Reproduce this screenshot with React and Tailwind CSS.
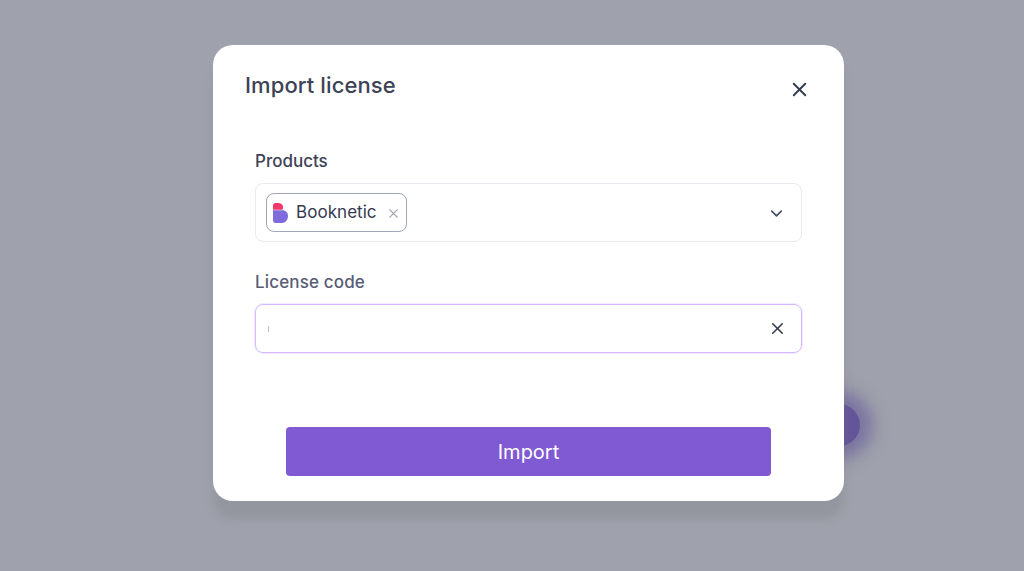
import React from "react";
import { X, ChevronDown } from "lucide-react";

const BookneticLogo = () => (
  <svg width="16" height="20" viewBox="0 0 16 20" className="shrink-0">
    <path d="M0 2.5C0 1.100 1.100 0 2.500 0H5C7.800 0 10 1.600 10 4 10 5 9.800 5.900 9.400 6.800H0Z" fill="#f5386c" />
    <path d="M0 7.200H9.500C12.800 7.200 15 9.800 15 13S12.800 20 9 20H2.500C1.100 20 0 18.900 0 17.500Z" fill="#7f6bdc" />
  </svg>
);

export default function App() {
  return (
    <div
      className="relative h-[571px] w-[1024px] overflow-hidden bg-[#9fa2ac] pl-[213px] pt-[45px]"
      style={{ fontFamily: "Inter, sans-serif" }}
    >
      {/* floating button glow behind the modal */}
      <div className="absolute left-[818px] top-[404px] h-[42px] w-[42px] rounded-full bg-[#64559a] shadow-[0_0_16px_13px_rgba(100,85,154,0.6)]" />

      <div className="relative flex h-[456px] w-[631px] flex-col rounded-[20px] bg-white shadow-[0_18px_10px_rgba(110,115,120,0.25)]">
        <div className="flex items-start justify-between pl-8 pr-[33px] pt-[26px]">
          <h2 className="text-[22px] font-medium leading-[28px] tracking-[0.1px] text-[#3d4256]">Import license</h2>
          <X size={23} strokeWidth={2} className="mt-[7px] text-[#333b4f]" />
        </div>

        <div className="flex flex-col px-[42px] pt-[50px]">
          <label className="text-[17px] font-medium leading-5 text-[#3d4256]">Products</label>
          <div className="mt-[12px] flex h-[59px] items-center justify-between rounded-lg border border-[#e9e9f3] pl-[10px] pr-[15px]">
            <div className="flex h-[39px] w-[141px] items-center rounded-lg border border-[#a3a6b8] pl-[6px]">
              <BookneticLogo />
              <span className="ml-[7px] pt-px text-[17px] tracking-[0.05px] text-[#343a50]">Booknetic</span>
              <X size={15} strokeWidth={1.75} className="ml-[9px] mt-px text-[#a5a7b3]" />
            </div>
            <ChevronDown size={19} strokeWidth={2} className="mt-px text-[#444a5e]" />
          </div>

          <label className="mt-[30px] text-[17px] font-medium leading-5 tracking-[0.15px] text-[#585c76]">License code</label>
          <div className="mt-[12px] flex h-[49px] items-center justify-between rounded-lg border border-[#d8b8fd] pl-3 pr-[14px] shadow-[0_0_0_1px_#f3eaff]">
            <div className="h-[6px] w-px bg-[#b9c0dc]" />
            <X size={19} strokeWidth={2} className="text-[#333b4f]" />
          </div>
        </div>

        <div className="px-[73px] pt-[74px]">
          <button className="flex h-[49px] w-full items-center justify-center rounded bg-[#7f5ad3] text-xl text-white">
            Import
          </button>
        </div>
      </div>
    </div>
  );
}
